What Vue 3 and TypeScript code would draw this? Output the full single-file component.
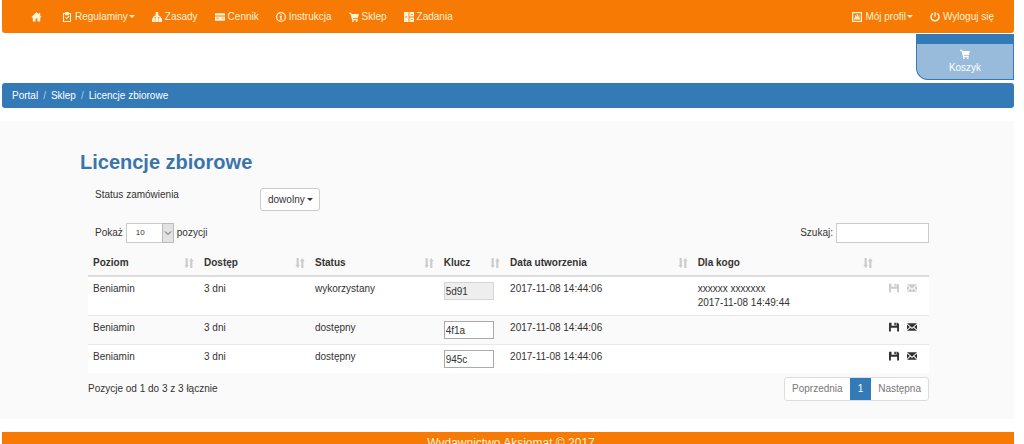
<script setup lang="ts">
import { ref } from 'vue'

interface NavItem {
  label: string
  icon: string
  caret?: boolean
}

interface Licence {
  level: string
  access: string
  status: string
  key: string
  created: string
  person?: string
  assigned?: string
  used: boolean
}

const icons: Record<string, string> = {
  home: 'M8 0 0 8l1 1.200 1-.8V15h4.500v-4.600h3V15H14V8.400l1 .8L16 8l-2-2V1.500h-2.500v2z',
  rules:
    'M5 0h6v1.500h3.500V16h-13V1.500H5zM3.300 3.300v11h9.400v-11H11V5H5V3.300zM5 9l1.200-1.200L7.600 9l3-3L12 7.300 7.600 11.700z',
  tree: 'M6 0h4v5.500c3 .3 4.500 2 4.500 4.500H16v6h-5v-6h1.300c0-1.500-.8-2.200-2.300-2.400V10h.5v6h-5v-6H6V7.600c-1.500.2-2.300.9-2.300 2.400H5v6H0v-6h1.500C1.500 7.500 3 5.800 6 5.500z',
  card: 'M0 2h16v3.500H0zM0 7h16v7H0zM2 9v1.500h4V9zM11 9v1.500h3V9z',
  info: 'M8 0a8 8 0 1 0 0 16A8 8 0 0 0 8 0zm0 2a6 6 0 1 1 0 12A6 6 0 0 1 8 2zM7 3.500h2v2H7zM6 6.500h3V11h1v1.500H6V11h1V8H6z',
  cart: 'M0 1h3.500l.7 2H16l-2 7H6.200l.3 1.200H14V13H5L2.300 2.800H0zM5 13.500h2.500V16H5zM11 13.500h2.500V16H11z',
  tasks: 'M0 0h7.300v16H0zM8.700 0H16v7.300H8.700zM8.700 8.700H16V16H8.700zM2 7.300v1.400h3V7.300zM11 3v1.200h3V3zM11 11.500v1.200h3v-1.200z',
  profile:
    'M0 0h16v16H0zM2 2v12h12V2zM7.500 3.500h2v4h1V5h1.500v5H13v2H3v-2h1.500V5H6v2h1.500z',
  power:
    'M7 0h2v8H7zM4.200 1.200l1.200 2a5.200 5.200 0 1 0 5.200 0l1.200-2a7.600 7.600 0 1 1-7.600 0z',
  save: 'M0 1h4v5h8V1h2l2 2v12h-3V9H3v6H0zM8.500 1H11v4H8.500z',
  mail: 'M0 2h16L8 9zM0 4l4.500 4L0 12zM16 4v8l-4.500-4zM0 14l5.500-5L8 11l2.500-2 5.500 5z',
  sort: 'M2.500 0H6v11h2l-3.700 5L.5 11h2zM10 16V5H8l3.700-5L15.500 5h-2v11z',
}

const mainNav: NavItem[] = [
  { label: 'Regulaminy', icon: 'rules', caret: true },
  { label: 'Zasady', icon: 'tree' },
  { label: 'Cennik', icon: 'card' },
  { label: 'Instrukcja', icon: 'info' },
  { label: 'Sklep', icon: 'cart' },
  { label: 'Zadania', icon: 'tasks' },
]
const userNav: NavItem[] = [
  { label: 'Mój profil', icon: 'profile', caret: true },
  { label: 'Wyloguj się', icon: 'power' },
]
const columns = ['Poziom', 'Dostęp', 'Status', 'Klucz', 'Data utworzenia', 'Dla kogo']

const licences = ref<Licence[]>([
  {
    level: 'Beniamin', access: '3 dni', status: 'wykorzystany', key: '5d91',
    created: '2017-11-08 14:44:06', person: 'xxxxxx xxxxxxx', assigned: '2017-11-08 14:49:44', used: true,
  },
  { level: 'Beniamin', access: '3 dni', status: 'dostępny', key: '4f1a', created: '2017-11-08 14:44:06', used: false },
  { level: 'Beniamin', access: '3 dni', status: 'dostępny', key: '945c', created: '2017-11-08 14:44:06', used: false },
])
const pageSize = ref('10')
const search = ref('')
</script>

<template>
  <div class="page">
    <nav class="navbar">
      <ul>
        <li class="home">
          <a href="#" aria-label="Strona główna">
            <svg class="icon" viewBox="0 0 16 16"><path :d="icons.home" /></svg>
          </a>
        </li>
        <li v-for="item in mainNav" :key="item.label">
          <a href="#">
            <svg class="icon" viewBox="0 0 16 16"><path fill-rule="evenodd" :d="icons[item.icon]" /></svg>
            <span>{{ item.label }}<i v-if="item.caret" class="caret" /></span>
          </a>
        </li>
      </ul>
      <ul>
        <li v-for="item in userNav" :key="item.label">
          <a href="#">
            <svg class="icon" viewBox="0 0 16 16"><path fill-rule="evenodd" :d="icons[item.icon]" /></svg>
            <span>{{ item.label }}<i v-if="item.caret" class="caret" /></span>
          </a>
        </li>
      </ul>
    </nav>

    <div class="basket-row">
      <a class="basket" href="#">
        <svg class="icon" viewBox="0 0 16 16"><path :d="icons.cart" /></svg>
        <span>Koszyk</span>
      </a>
    </div>

    <nav class="breadcrumb">
      <a href="#">Portal</a><span class="slash">/</span>
      <a href="#">Sklep</a><span class="slash">/</span>
      <a href="#">Licencje zbiorowe</a>
    </nav>

    <main class="panel">
      <h1>Licencje zbiorowe</h1>
      <div class="content">
        <div class="status-row">
          <span id="status-label">Status zamówienia</span>
          <button type="button" class="dropdown" aria-describedby="status-label">dowolny<i class="caret" /></button>
        </div>

        <div class="tools">
          <div class="tool">
            <label for="page-size">Pokaż</label>
            <span class="select">
              <select id="page-size" v-model="pageSize">
                <option>10</option>
                <option>25</option>
                <option>50</option>
              </select>
              <span class="arrow">
                <svg viewBox="0 0 8 8"><path d="M1 2.500 4 5.500 7 2.500" /></svg>
              </span>
            </span>
            <span>pozycji</span>
          </div>
          <div class="tool">
            <label for="search">Szukaj:</label>
            <input id="search" v-model="search" type="text" class="search" />
          </div>
        </div>

        <table>
          <colgroup>
            <col class="c-level" /><col class="c-level" /><col class="c-status" /><col class="c-key" />
            <col class="c-date" /><col class="c-who" /><col />
          </colgroup>
          <thead>
            <tr>
              <th v-for="name in columns" :key="name" scope="col">
                <div class="head">
                  {{ name }}
                  <svg class="icon sort" viewBox="0 0 16 16"><path :d="icons.sort" /></svg>
                </div>
              </th>
              <th />
            </tr>
          </thead>
          <tbody>
            <tr v-for="row in licences" :key="row.key">
              <td>{{ row.level }}</td>
              <td>{{ row.access }}</td>
              <td>{{ row.status }}</td>
              <td><input v-model="row.key" class="key" type="text" aria-label="Klucz" :disabled="row.used" /></td>
              <td>{{ row.created }}</td>
              <td>
                <template v-if="row.person">
                  <div>{{ row.person }}</div>
                  <div>{{ row.assigned }}</div>
                </template>
              </td>
              <td>
                <div class="actions">
                  <button type="button" aria-label="Zapisz" :disabled="row.used">
                    <svg class="icon" viewBox="0 0 16 16"><path :d="icons.save" /></svg>
                  </button>
                  <button type="button" aria-label="Wyślij" :disabled="row.used">
                    <svg class="icon" viewBox="0 0 16 16"><path :d="icons.mail" /></svg>
                  </button>
                </div>
              </td>
            </tr>
          </tbody>
        </table>

        <div class="summary">
          <span>Pozycje od 1 do 3 z 3 łącznie</span>
          <div class="pager">
            <button type="button">Poprzednia</button>
            <button type="button" class="current">1</button>
            <button type="button">Następna</button>
          </div>
        </div>
      </div>
    </main>

    <footer>Wydawnictwo Aksjomat © 2017</footer>
  </div>
</template>

<style>
body {
  background: #fff;
  overflow: hidden;
}
</style>

<style scoped>
.page {
  padding-right: 10px;
  font: 10px/14px 'Liberation Sans', Arial, sans-serif;
  color: #333;
}
.page * {
  box-sizing: border-box;
}
button,
input,
select {
  font: inherit;
  color: inherit;
}
a {
  color: inherit;
  text-decoration: none;
}
.icon {
  display: block;
  flex: none;
  width: 10px;
  height: 10px;
  fill: currentColor;
}
.caret {
  display: inline-block;
  margin-left: 1px;
  vertical-align: middle;
  border: 3px solid transparent;
  border-top-color: currentColor;
  border-bottom: 0;
}
.navbar {
  display: flex;
  justify-content: space-between;
  height: 33px;
  margin-left: 2px;
  padding: 0 12px 0 20px;
  border-radius: 0 0 3px 3px;
  background: #f77a04;
  color: #fff3d6;
}
.navbar ul {
  display: flex;
  margin: 0;
  padding: 0;
  list-style: none;
}
.navbar a {
  display: flex;
  align-items: center;
  gap: 3px;
  height: 33px;
  padding: 0 8px 0 9px;
}
.home {
  padding-right: 3px;
}
.home .icon {
  width: 11px;
}
.basket-row {
  display: flex;
  justify-content: flex-end;
  height: 50px;
  padding-top: 1px;
}
.basket {
  display: flex;
  flex-direction: column;
  align-items: center;
  gap: 2px;
  width: 98px;
  height: 46px;
  padding-top: 5px;
  border: 1px solid #337ab7;
  border-top-width: 10px;
  border-radius: 0 0 0 12px;
  background: #99bbdb;
  color: #fff;
}
.breadcrumb {
  display: flex;
  align-items: center;
  height: 25px;
  margin-left: 2px;
  padding: 0 10px;
  border-radius: 3px;
  background: #337ab7;
  color: #fff;
}
.slash {
  padding: 0 5px;
  color: #b5cde3;
}
.panel {
  margin-top: 13px;
  padding: 29px 85px 18px 80px;
  background: #fafafa;
}
h1 {
  margin: 0;
  font-size: 20px;
  line-height: 24px;
  color: #3a76a8;
}
.content {
  padding-left: 8px;
}
.status-row {
  display: grid;
  grid-template-columns: 165px auto;
  justify-content: start;
  align-items: start;
  margin-top: 14px;
  padding-left: 7px;
}
.dropdown {
  height: 23px;
  padding: 0 6px 0 7px;
  border: 1px solid #ccc;
  border-radius: 3px;
  background: #fff;
}
.dropdown .caret {
  margin-left: 2px;
}
.tools {
  display: flex;
  justify-content: space-between;
  margin-top: 12px;
  padding-left: 7px;
}
.tool {
  display: flex;
  align-items: center;
  gap: 3px;
}
.select {
  position: relative;
  display: flex;
}
select {
  width: 48px;
  height: 20px;
  padding: 0 9px;
  border: 1px solid #ccc;
  border-radius: 0;
  background: #fff;
  appearance: none;
  font-size: 8px;
}
.arrow {
  position: absolute;
  top: 0;
  right: 0;
  display: flex;
  align-items: center;
  justify-content: center;
  width: 12px;
  height: 20px;
  border: 1px solid #bbb;
  background: #e2e2e2;
  pointer-events: none;
}
.arrow svg {
  width: 8px;
  height: 8px;
  fill: none;
  stroke: #555;
}
.search {
  width: 93px;
  height: 20px;
  border: 1px solid #ccc;
  background: #fff;
}
table {
  width: 100%;
  margin-top: 7px;
  table-layout: fixed;
  border-collapse: separate;
  border-spacing: 0;
}
.c-level {
  width: 13.2%;
}
.c-status {
  width: 15.3%;
}
.c-key {
  width: 7.9%;
}
.c-date {
  width: 22.3%;
}
.c-who {
  width: 22%;
}
th {
  padding: 6px 5px 5px;
  border-bottom: 2px solid #ddd;
  text-align: left;
}
.head {
  display: flex;
  align-items: center;
  justify-content: space-between;
}
.sort {
  color: #ccc;
}
td {
  padding: 5px;
  vertical-align: top;
}
tbody tr + tr td {
  border-top: 1px solid #e8e8e8;
}
tbody tr:nth-child(odd) {
  background: #fff;
}
.key {
  display: block;
  width: 50px;
  height: 18px;
  padding: 0 1px;
  border: 1px solid #aaa;
  background: #fff;
}
.key:disabled {
  border-color: #d5d5d5;
  background: #eee;
}
.actions {
  display: flex;
  justify-content: flex-end;
  gap: 8px;
  padding: 1px 7px 0 0;
}
.actions button {
  padding: 0;
  border: 0;
  background: none;
}
.actions button:disabled {
  color: #ccc;
}
.summary {
  display: flex;
  align-items: center;
  justify-content: space-between;
  margin-top: 4px;
}
.pager {
  display: flex;
  border: 1px solid #ddd;
  border-radius: 3px;
  background: #fff;
  color: #777;
}
.pager button {
  height: 22px;
  padding: 0 7px;
  border: 0;
  background: none;
}
.pager .current {
  padding: 0 8px;
  background: #337ab7;
  color: #fff;
}
footer {
  height: 33px;
  margin: 13px 0 0 2px;
  padding: 4px 0 0 6px;
  background: #f77a04;
  color: #fff3d6;
  font-size: 12px;
  text-align: center;
}
</style>
